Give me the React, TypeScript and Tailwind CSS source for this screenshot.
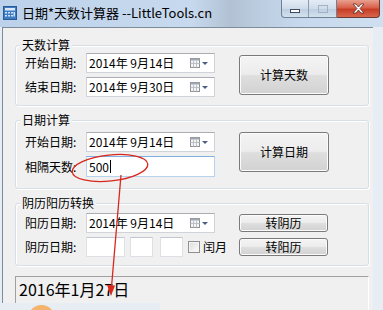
import type { ReactNode } from "react";

function AppIcon() {
  return (
    <svg width="14" height="14" viewBox="0 0 14 14" className="shrink-0">
      <rect x="0.5" y="0.5" width="13" height="13" fill="#3f7cc4" stroke="#2a5a96" />
      <rect x="2" y="2" width="10" height="2.5" fill="#dbe9f8" />
      <path
        d="M2 6h2v1.5H2zM5 6h2v1.5H5zM8 6h2v1.5H8zM2 9h2v1.5H2zM5 9h2v1.5H5zM8 9h2v1.5H8z"
        fill="#cfe2f7"
      />
      <rect x="10.5" y="6" width="1.5" height="4.5" fill="#cfe2f7" />
    </svg>
  );
}

function CalIcon() {
  return (
    <svg width="18" height="10" viewBox="0 0 18 10" className="shrink-0">
      <rect x="0.5" y="0.5" width="9" height="9" fill="#f3f4f6" stroke="#8e939a" />
      <rect x="0.5" y="0.5" width="9" height="2" fill="#a2a7ae" />
      <path d="M0.5 5.5h9M3.5 2.5v7M6.5 2.5v7" stroke="#bcc0c6" strokeWidth="1" />
      <path d="M12 4h6l-3 3z" fill="#4b5f80" />
    </svg>
  );
}

function DatePicker({ value }: { value: string }) {
  return (
    <div className="flex h-[20px] w-[129px] items-center border border-[#cfd3da] border-t-[#abadb3] bg-white pl-[2px] pr-[6px]">
      <span className="flex-1 whitespace-pre text-[12px] leading-none text-black">{value}</span>
      <CalIcon />
    </div>
  );
}

function Btn({ children, className }: { children: ReactNode; className: string }) {
  return (
    <button
      type="button"
      className={`flex items-center justify-center rounded-[3px] border border-[#7a7a7a] bg-[linear-gradient(180deg,#f4f4f4_0%,#ececec_48%,#dedede_52%,#d2d2d2_100%)] text-[12px] leading-none text-black shadow-[inset_0_0_0_1px_#fbfbfb] ${className}`}
    >
      {children}
    </button>
  );
}

function Box({ className }: { className: string }) {
  return <div className={`h-[20px] border border-[#dde1e6] border-t-[#c3c7cd] bg-white ${className}`} />;
}

function Group({ title, className, children }: { title: string; className: string; children: ReactNode }) {
  return (
    <fieldset
      className={`w-[354px] rounded-[3px] border border-[#d5dfe5] shadow-[inset_1px_1px_0_#fff,1px_1px_0_#fff] ${className}`}
    >
      <legend className="ml-[4px] bg-[#f0f0f0] px-[2px] text-[12px] leading-[16px]">{title}</legend>
      {children}
    </fieldset>
  );
}

export default function App() {
  return (
    <div className="relative flex h-[310px] w-[383px] flex-col overflow-hidden bg-[#e6edf4] font-['Noto_Sans_CJK_SC','Noto_Sans',sans-serif] text-black">
      {/* title bar */}
      <div className="flex h-[27px] shrink-0 items-start bg-[linear-gradient(90deg,#bcd2ea_0%,#c7d9ee_50%,#b2c2d4_60%,#bccde0_68%,#c6d8ed_78%,#cfdff0_100%)]">
        <div className="ml-[3px] mt-[6px]">
          <AppIcon />
        </div>
        <span className="ml-[5px] mt-[4px] whitespace-pre text-[13px] leading-[17px] text-black">
          日期*天数计算器 --LittleTools.cn
        </span>
        <div className="ml-auto mr-[3px] flex">
          <div className="flex h-[18px] overflow-hidden rounded-bl-[4px] border border-t-0 border-[#6f8197] bg-[linear-gradient(180deg,#e4ecf6_0%,#cfdcea_50%,#bccde0_51%,#d4e1ee_100%)]">
            <div className="flex w-[27px] items-center justify-center border-r border-[#8c9cb0]">
              <div className="mt-[4px] h-[4px] w-[10px] border border-[#3b4a5e] bg-white" />
            </div>
            <div className="flex w-[27px] items-center justify-center">
              <div className="h-[8px] w-[10px] border border-[#9aa8b8] opacity-80" />
            </div>
          </div>
          <div className="flex h-[18px] w-[43px] items-center justify-center rounded-br-[4px] border border-l-0 border-t-0 border-[#6b3a30] bg-[linear-gradient(180deg,#e9a08f_0%,#d8614b_45%,#c73d26_55%,#d8664c_100%)]">
            <svg width="13" height="11" viewBox="0 0 13 11">
              <path
                d="M1 1h3l2.5 3 2.5-3h3l-4 4.5 4 4.5h-3l-2.5-3-2.5 3h-3l4-4.5z"
                fill="#fff"
                stroke="#5a2a22"
                strokeWidth="0.8"
              />
            </svg>
          </div>
        </div>
      </div>

      {/* client area */}
      <div className="ml-[2px] mr-[10px] flex-1 border-l border-t border-[#7d8b9a] bg-[#f0f0f0] pl-[12px]">
        <Group title="天数计算" className="mt-[9px] pb-[8px]">
          <div className="grid grid-cols-[61px_153px_90px] grid-rows-[20px_20px] items-center gap-y-[4px] pl-[9px] text-[12px]">
            <span>开始日期:</span>
            <DatePicker value="2014年 9月14日" />
            <Btn className="col-start-3 row-span-2 row-start-1 h-[40px] w-[90px]">计算天数</Btn>
            <span>结束日期:</span>
            <DatePicker value="2014年 9月30日" />
          </div>
        </Group>

        <Group title="日期计算" className="mt-[6px] pb-[11px]">
          <div className="grid grid-cols-[61px_153px_90px] grid-rows-[20px_21px] items-center gap-y-[4px] pl-[9px] pt-[4px] text-[12px]">
            <span>开始日期:</span>
            <DatePicker value="2014年 9月14日" />
            <Btn className="col-start-3 row-span-2 row-start-1 h-[40px] w-[90px] self-start">计算日期</Btn>
            <span>相隔天数:</span>
            <div className="flex h-[21px] w-[129px] items-center border border-[#b5d2ee] border-t-[#7fb0e0] bg-white pl-[2px] text-[12px] leading-none">
              500
              <span className="ml-px h-[13px] w-px bg-black" />
            </div>
          </div>
        </Group>

        <Group title="阴历阳历转换" className="mt-[6px] pb-[8px]">
          <div className="grid grid-cols-[61px_153px_89px] grid-rows-[20px_20px] items-center gap-y-[4px] pl-[9px] pt-[2px] text-[12px]">
            <span>阳历日期:</span>
            <DatePicker value="2014年 9月14日" />
            <Btn className="h-[18px] w-[89px]">转阴历</Btn>
            <span>阴历日期:</span>
            <div className="flex items-center">
              <Box className="w-[39px]" />
              <Box className="ml-[5px] w-[23px]" />
              <Box className="ml-[7px] w-[23px]" />
              <div className="ml-[5px] h-[12px] w-[12px] border border-[#8f8f8f] bg-[linear-gradient(135deg,#dcdcdc,#fdfdfd)] shadow-[inset_0_0_0_1px_#f4f4f4]" />
              <span className="ml-[3px]">闰月</span>
            </div>
            <Btn className="h-[18px] w-[89px]">转阳历</Btn>
          </div>
        </Group>

        <div className="mt-[10px] h-[40px] w-[354px] border border-[#a0a0a0] border-b-white border-r-white pl-[3px] pt-[2px] text-[16px] leading-[20px]">
          2016年1月27日
        </div>
      </div>

      {/* notification strip peeking in at the bottom */}
      <div className="absolute bottom-0 left-0 h-[7px] w-[160px] overflow-hidden bg-[#e7eef3]">
        <div className="ml-[28px] mt-[2px] h-[27px] w-[27px] rounded-full bg-[#f3b36b]" />
      </div>

      {/* red annotation */}
      <svg className="pointer-events-none absolute left-0 top-0" width="383" height="310" viewBox="0 0 383 310">
        <ellipse
          cx="110"
          cy="168"
          rx="38"
          ry="13"
          transform="rotate(-6 110 168)"
          fill="none"
          stroke="#d8281e"
          strokeWidth="1.3"
        />
        <path d="M121 175L111.5 287" stroke="#d8281e" strokeWidth="1.3" fill="none" />
        <path d="M111 296L107 285L115 285.5Z" fill="#d8281e" />
      </svg>
    </div>
  );
}
